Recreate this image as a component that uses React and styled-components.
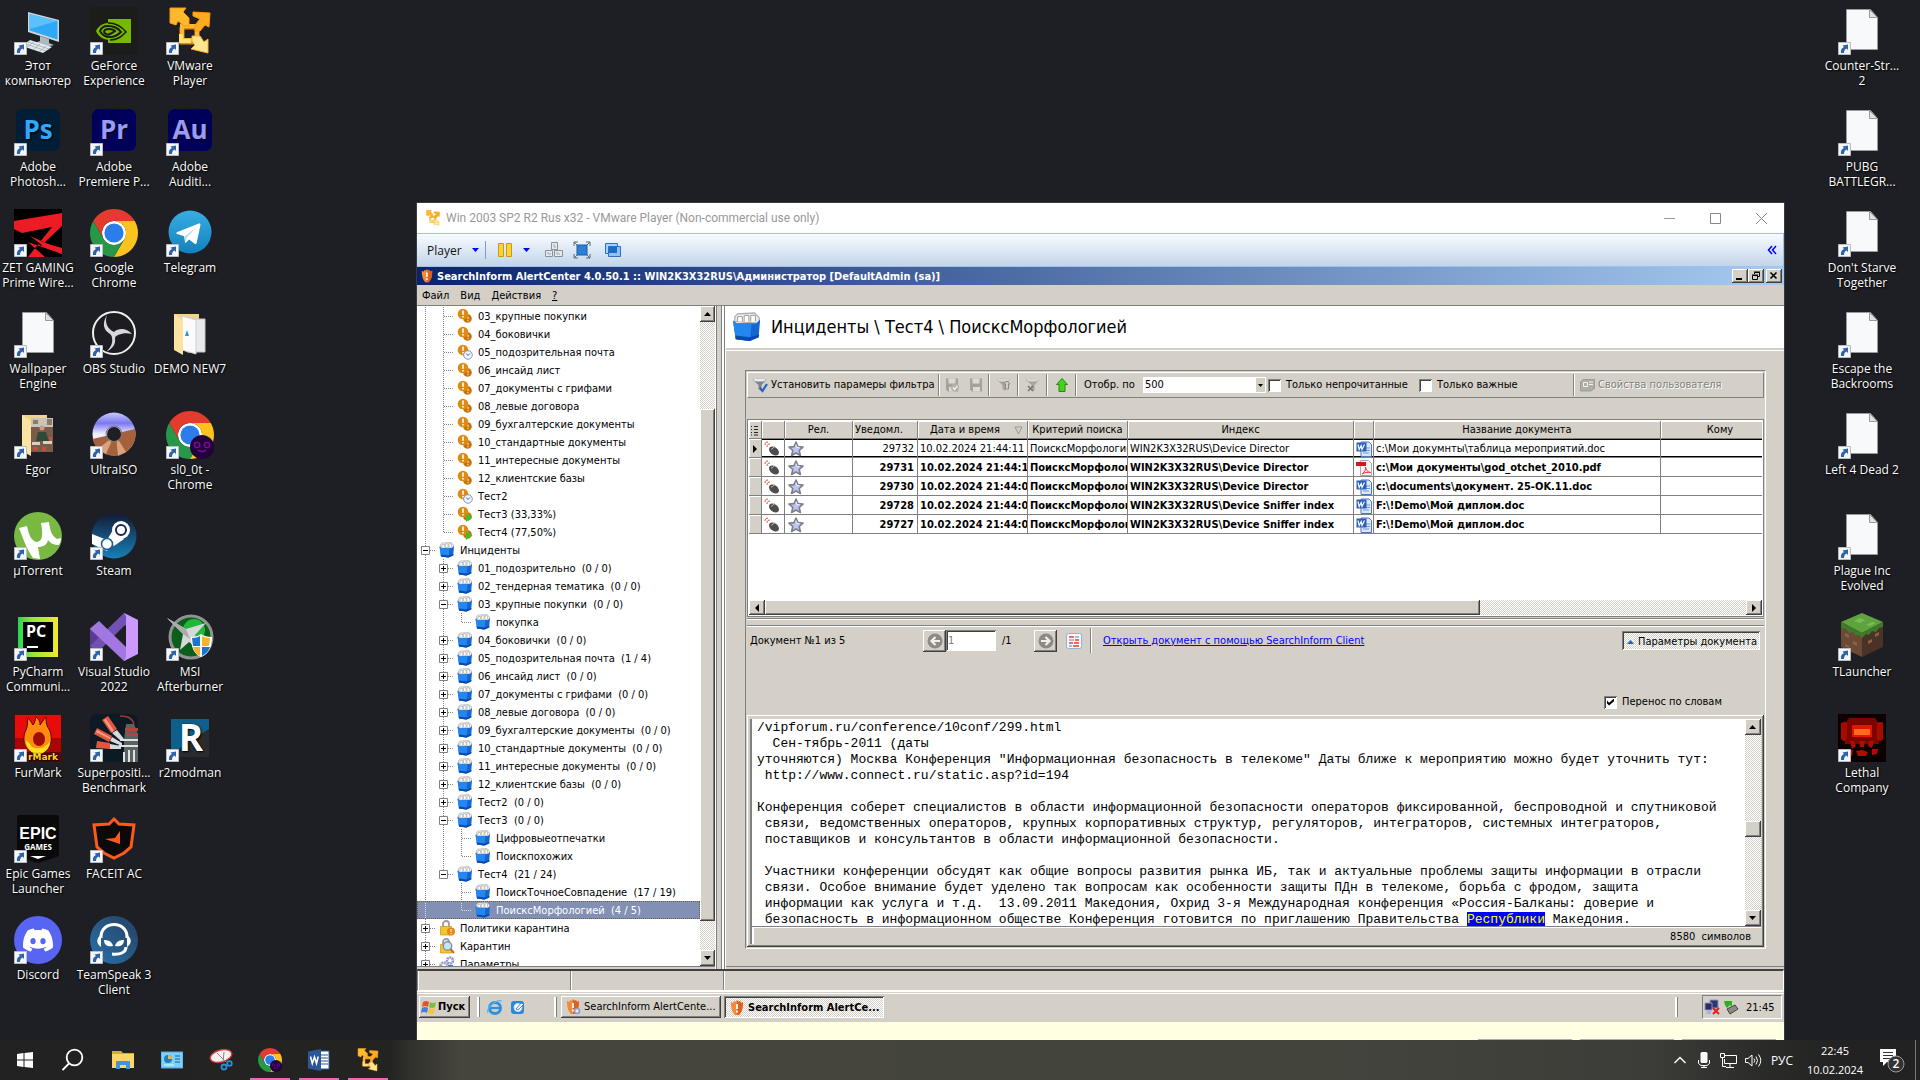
import React from 'react'
import styled, { createGlobalStyle, css } from 'styled-components'
import { SiDiscord } from 'react-icons/si'

const face = '#d4d0c8'
const ui = '"Open Sans", "Noto Sans", sans-serif'
const tahoma = '"DejaVu Sans Condensed", "DejaVu Sans", sans-serif'

const raised = css`
box-shadow: inset -1px -1px #404040, inset 1px 1px #fff, inset -2px -2px #808080;
`
const sunken = css`
box-shadow: inset 1px 1px #808080, inset -1px -1px #fff, inset 2px 2px #404040;
`
const checker = css`
background: repeating-conic-gradient(#fff 0 25%, ${face} 0 50%) 0 0 / 2px 2px;
`

const GlobalStyle = createGlobalStyle`
* { box-sizing: border-box; }
body { margin: 0; background: #1e1f24; overflow: hidden; }
button { border: none; padding: 0; margin: 0; background: transparent; font: inherit; color: inherit; }
svg { display: block; flex: none; }
`

/* ---------- desktop ---------- */

const Page = styled.div`
height: 100vh;
display: flex;
flex-direction: column;
font-family: ${ui};
`
const Desktop = styled.main`
flex: 1;
min-height: 0;
position: relative;
overflow: hidden;
display: flex;
justify-content: space-between;
padding-right: 20px;
`
const Columns = styled.div`
display: flex;
`
const IconColumn = styled.div`
width: 76px;
display: grid;
grid-auto-rows: 101px;
`
const Tile = styled.button`
display: flex;
flex-direction: column;
align-items: center;
padding-top: 7px;
gap: 3px;
font-size: 12px;
line-height: 15px;
color: #fff;
text-shadow: 1px 1px 2px #000, 0 0 1px #000;
white-space: pre;
`
const TileIcon = styled.span`
position: relative;
width: 48px;
height: 48px;
display: flex;
align-items: center;
justify-content: center;
`
const Shortcut = styled.svg`
position: absolute;
left: 0;
bottom: 0;
`

/* ---------- vmware window ---------- */

const Window = styled.section`
position: absolute;
left: 417px;
right: 136px;
top: 203px;
bottom: 0;
display: flex;
flex-direction: column;
background: ${face};
outline: 1px solid #3a3b40;
`
const TitleBar = styled.header`
height: 30px;
flex: none;
display: flex;
align-items: center;
background: #fff;
color: #999;
font-family: Roboto, ${ui};
font-size: 12px;
padding-left: 8px;
`
const WindowTitle = styled.span`
flex: 1;
padding-left: 5px;
`
const Grow = styled.div`
flex: 1;
`
const TitleButton = styled.button`
width: 46px;
height: 30px;
display: flex;
align-items: center;
justify-content: center;
`
const PlayerBar = styled.div`
height: 34px;
flex: none;
display: flex;
align-items: center;
padding: 0 6px 0 10px;
border: 1px solid #a3c0e5;
border-left: none;
background: linear-gradient(#f8fbff, #c2d5ea);
color: #111;
font-size: 12px;
`
const PlayerButton = styled.button`
display: flex;
align-items: center;
justify-content: ${p => p.$left ? 'flex-start' : 'center'};
gap: 10px;
width: ${p => p.$w}px;
height: 24px;
`
const BlueRule = styled.i`
width: 1px;
height: 18px;
background: #7aa0cc;
`

/* ---------- guest system ---------- */

const Guest = styled.div`
flex: 1;
min-height: 0;
display: flex;
flex-direction: column;
font-family: ${tahoma};
font-size: 11px;
line-height: 14px;
color: #000;
`
const Caption = styled.div`
height: 18px;
flex: none;
display: flex;
align-items: center;
gap: 3px;
padding: 0 2px 0 3px;
background: linear-gradient(90deg, #0a246a, #a6caf0);
color: #fff;
font-weight: bold;
white-space: nowrap;

span {
    flex: 1;
    padding-top: 2px;
}
`
const CaptionButton = styled.button`
width: 16px;
height: 14px;
margin-left: ${p => p.$gap ? 2 : 0}px;
background: ${face};
${raised}
display: flex;
align-items: center;
justify-content: center;
`
const CaptionButtons = styled.div`
display: flex;
`
const Menu = styled.nav`
height: 21px;
flex: none;
display: flex;
align-items: center;
gap: 11px;
padding: 2px 0 0 5px;
border-bottom: 1px solid #808080;
`
const Body = styled.div`
flex: 1;
min-height: 0;
display: flex;
`
const TreePane = styled.aside`
width: 298px;
flex: none;
display: flex;
background: #fff;
border-bottom: 1px solid #808080;
margin-bottom: 2px;
`
const Tree = styled.ul`
flex: 1;
min-width: 0;
margin: 0;
padding: 1px 0 0;
list-style: none;
overflow: hidden;
`
const TreeRow = styled.li`
height: 18px;
display: flex;
align-items: center;
padding-left: 4px;
white-space: pre;
background: ${p => p.$on ? '#8290b5' : 'none'};
color: ${p => p.$on ? '#fff' : '#000'};
outline: ${p => p.$on ? '1px dotted #6b6440' : 'none'};
outline-offset: -1px;

span {
    padding: 2px 0 0 5px;
}
`
const Splitter = styled.div`
width: 10px;
flex: none;
border-left: 1px solid #fff;
border-right: 1px solid #808080;
box-shadow: inset 1px 0 #808080, inset -2px 0 #fff, inset -3px 0 #808080;
`
const Main = styled.div`
flex: 1;
min-width: 0;
display: flex;
flex-direction: column;
border-left: 1px solid #fff;
`
const Heading = styled.header`
height: 42px;
flex: none;
display: flex;
align-items: center;
gap: 9px;
padding-left: 6px;
background: #fff;

h1 {
    margin: 0;
    font-size: 18px;
    line-height: 22px;
    font-weight: normal;
}
`
const Work = styled.div`
flex: 1;
min-height: 0;
margin-top: 2px;
border-top: 1px solid #fff;
padding: 19px 18px 17px 19px;
border-bottom: 1px solid #808080;
margin-bottom: 2px;
display: flex;
flex-direction: column;
`
const Frame = styled.div`
flex: 1;
min-height: 0;
display: flex;
flex-direction: column;
border: 1px solid #808080;
border-right-color: #fff;
border-bottom-color: #fff;
padding: 1px;
`
const Toolbar = styled.div`
height: 26px;
flex: none;
display: flex;
align-items: center;
border: 1px solid #fff;
border-right-color: #808080;
border-bottom-color: #808080;
white-space: nowrap;
`
const ToolButton = styled.button`
width: ${p => p.$w}px;
height: 24px;
display: flex;
align-items: center;
justify-content: ${p => p.$left ? 'flex-start' : 'center'};
gap: 3px;
padding-left: ${p => p.$left ? 4 : 0}px;

&:disabled {
    color: #808080;
    text-shadow: 1px 1px #fff;
}
`
const Rule = styled.i`
width: 2px;
height: ${p => p.$h || 22}px;
flex: none;
border-left: 1px solid #808080;
border-right: 1px solid #fff;
`
const CountLabel = styled.label`
width: 66px;
padding-left: 7px;
`
const Combo = styled.span`
position: relative;
width: 123px;
height: 16px;
background: #fff;
display: flex;

select {
    flex: 1;
    appearance: none;
    border: none;
    background: none;
    padding: 0 2px;
    font: inherit;
    color: #000;
}
svg {
    position: absolute;
    right: 1px;
    top: 1px;
    background: ${face};
    pointer-events: none;
}
`
const Check = styled.label`
display: flex;
align-items: center;
gap: 5px;
width: ${p => p.$w}px;
margin-left: ${p => p.$ml || 0}px;
white-space: nowrap;

input {
    appearance: none;
    position: relative;
    flex: none;
    width: 13px;
    height: 13px;
    margin: 0;
    background: #fff;
    ${sunken}
}
input:checked::after {
    content: '';
    position: absolute;
    left: 3px;
    top: 3px;
    width: 7px;
    height: 7px;
    background: #000;
    clip-path: polygon(0 30%, 30% 60%, 100% 0, 100% 40%, 30% 100%, 0 70%);
}
`
const GridFrame = styled.div`
height: 198px;
flex: none;
margin-top: 21px;
display: flex;
flex-direction: column;
background: #fff;
border: 1px solid #404040;
border-right-color: #fff;
border-bottom-color: #fff;
outline: 1px solid #808080;
outline-offset: -1px;
padding: 1px;
`
const GridScroll = styled.div`
flex: 1;
min-height: 0;
overflow: hidden;
`
const Grid = styled.table`
width: calc(100% + 17px);
table-layout: fixed;
border-spacing: 0;

th {
    height: 18px;
    padding: 1px 2px 0;
    background: ${face};
    border-right: 1px solid #808080;
    border-bottom: 1px solid #808080;
    box-shadow: inset 1px 1px #fff;
    font-weight: normal;
    overflow: hidden;
    white-space: nowrap;
}
th:nth-child(4) {
    text-align: left;
}
td {
    height: 19px;
    padding: 1px 0 0 2px;
    border-right: 1px solid #808080;
    border-bottom: 1px solid #808080;
    overflow: hidden;
    white-space: nowrap;
}
th:last-child, td:last-child {
    border-right: none;
}
`
const GridRow = styled.tr`
font-weight: ${p => p.$read ? 'normal' : 'bold'};

td {
    ${p => p.$read && 'box-shadow: inset 0 1px #000, inset 0 -1px #000;'}
}
td:first-child {
    background: ${face};
    box-shadow: inset 1px 1px #fff;
}
td:nth-child(3) {
    padding-left: 3px;
}
td:nth-child(4) {
    text-align: right;
    padding-right: 3px;
}
`
const SortHead = styled.div`
display: flex;
align-items: center;
justify-content: center;
gap: 14px;
padding-left: 8px;
`
const Bar = styled.div`
display: flex;
flex: none;
flex-direction: ${p => p.$v ? 'column' : 'row'};
width: ${p => p.$v ? `${p.$size}px` : 'auto'};
height: ${p => p.$v ? 'auto' : '15px'};
${checker}
`
const BarButton = styled.button`
flex: none;
width: 16px;
height: 16px;
max-width: 100%;
max-height: 100%;
background: ${face};
${raised}
display: flex;
align-items: center;
justify-content: center;
align-self: stretch;
`
const BarPart = styled.div`
flex: ${p => p.$grow} 1 0;
${p => p.$thumb && css`background: ${face}; ${raised}`}
`
const Divider = styled.div`
height: 9px;
flex: none;
margin-top: 1px;
border-top: 1px solid #808080;
border-bottom: 1px solid #fff;
box-shadow: inset 0 1px #fff, inset 0 -1px #808080;
`
const DocBar = styled.div`
height: 27px;
flex: none;
display: flex;
align-items: center;
padding: 0 4px 0 3px;
white-space: nowrap;

a {
    color: #00f;
    margin-left: 11px;
}
`
const DocTitle = styled.div`
width: 173px;
`
const PageButton = styled.button`
width: 23px;
height: 22px;
background: ${face};
${raised}
display: flex;
align-items: center;
justify-content: center;
`
const PageInput = styled.input`
width: 50px;
height: 21px;
border: none;
padding: 0 2px;
${sunken}
background: #fff;
font: inherit;
color: #808080;
`
const PageTotal = styled.span`
width: 38px;
padding-left: 6px;
`
const Pressed = styled.button`
${checker}
${sunken}
height: ${p => p.$h}px;
width: ${p => p.$w}px;
display: flex;
align-items: center;
gap: ${p => p.$gap}px;
padding: 2px 0 0 5px;
font-weight: ${p => p.$bold ? 'bold' : 'normal'};
`
const DocOptions = styled.div`
flex: none;
height: 61px;
display: flex;
justify-content: flex-end;
align-items: flex-end;
padding-bottom: 6px;
`
const DocFrame = styled.div`
flex: 1;
min-height: 0;
display: flex;
flex-direction: column;
${raised}
padding: 4px 3px 3px 3px;
`
const DocView = styled.div`
flex: 1;
min-height: 0;
display: flex;
background: #fff;
border-left: 2px solid #808080;
border-bottom: 1px solid #7f7c8c;
`
const DocText = styled.pre`
flex: 1;
min-width: 0;
margin: 0;
padding: 1px 0 0 5px;
overflow: hidden;
font-family: "Liberation Mono", monospace;
font-size: 13px;
line-height: 16px;

mark {
    background: #00f;
    color: #ff0;
}
`
const DocStatus = styled.div`
height: 17px;
flex: none;
border-left: 2px solid #808080;
box-shadow: inset 2px 1px #fff;
padding: 3px 10px 0 0;
text-align: right;
white-space: pre;
`
const StatusBar = styled.footer`
height: 22px;
flex: none;
display: flex;
border: 1px solid #fff;
border-top: 2px solid #404040;
border-left: 1px solid #808080;

div {
    width: 153px;
    border-right: 1px solid #808080;
    box-shadow: inset 1px 0 #fff;
}
div:last-child {
    flex: 1;
    border: none;
}
`
const GuestTaskbar = styled.footer`
height: 31px;
flex: none;
display: flex;
align-items: center;
padding: 0 2px;
border-top: 1px solid #fff;
box-shadow: inset 0 1px ${face}, inset 0 2px #fff;
white-space: nowrap;
`
const StartButton = styled.button`
width: 51px;
height: 22px;
background: ${face};
${raised}
display: flex;
align-items: center;
gap: 1px;
padding-left: 2px;
font-weight: bold;
`
const Grip = styled.i`
width: 3px;
height: 20px;
flex: none;
margin: 0 4px 0 7px;
border-left: 2px solid #fff;
border-right: 1px solid #808080;
`
const Quick = styled.div`
display: flex;
gap: 7px;
width: 63px;
padding-left: 3px;
`
const TaskButton = styled.button`
width: 160px;
height: 22px;
margin-right: 3px;
background: ${face};
${raised}
display: flex;
align-items: center;
gap: 3px;
padding-left: 4px;
`
const GuestTray = styled.div`
width: 80px;
height: 24px;
margin-left: 20px;
display: flex;
align-items: center;
gap: 3px;
padding-left: 1px;
border: 1px solid #808080;
border-right-color: #fff;
border-bottom-color: #fff;

time {
    padding: 2px 0 0 4px;
}
`
const Slab = styled.div`
height: 18px;
flex: none;
background: #ffffe1;
display: flex;
justify-content: flex-end;
align-items: flex-end;
gap: 8px;
padding-right: 8px;

i {
    width: 94px;
    height: 1px;
    background: #a9abb0;
}
`

/* ---------- host taskbar ---------- */

const Taskbar = styled.footer`
height: 40px;
flex: none;
display: flex;
background: linear-gradient(90deg, #222 0, #232322 390px, #33332e 415px, #45453c 460px, #43443c 70%, #3c3d38 86%, #2a2a29 92%, #222 96%);
color: #fff;
font-size: 12px;
line-height: 19px;
`
const TaskIcon = styled.button`
width: 49px;
height: 40px;
display: flex;
align-items: center;
justify-content: center;
background: ${p => p.$open ? 'linear-gradient(#e76ab8, #e76ab8) center bottom / 40px 2px no-repeat' : 'none'};
`
const Tray = styled.div`
display: flex;
align-items: center;
margin-left: auto;
`
const TrayButton = styled.button`
width: ${p => p.$w}px;
height: 40px;
display: flex;
align-items: center;
justify-content: center;
`
const Clock = styled.time`
width: 72px;
font-size: 11px;
text-align: center;
`
const ShowDesktop = styled.button`
width: 5px;
height: 40px;
border-left: 1px solid #777;
`

/* ---------- drawings ---------- */

const Svg = ({ s = 48, v = 48, children, ...rest }) => (
    <svg width={s} height={s} viewBox={`0 0 ${v} ${v}`} fill="none" {...rest}>{children}</svg>
)

const Computer = () => (
    <Svg>
        <path d="M14 5 45 13v22L14 25z" fill="#cfd6dc" />
        <path d="M15.500 7 43.500 14v18.500L15.500 23.500z" fill="#2fa8f5" />
        <path d="M15.500 7 43.500 14 15.500 22z" fill="#5cc0fb" />
        <path d="M26 29 35 32v4l5 2-7 2-12-4 5-2z" fill="#aeb8c0" />
        <path d="M16 33 38 40l-9 6L8 39z" fill="#e3e8ec" />
        <path d="M14 35 35 42M12 37l20 7M20 34.500 12 41M26 37l-7 6M32 39l-7 6" stroke="#9aa4ad" strokeWidth=".7" />
    </Svg>
)

const Nvidia = () => (
    <Svg>
        <path d="M0 0h48v48H0z" fill="#1c1d1b" />
        <path d="M18 12h23v24H18z" fill="#76b900" />
        <path d="M18 16c-6 0-10 4-12 8 2 5 7 9 14 9 8 0 12-4 16-8-4-5-10-9-18-9z" fill="#76b900" />
        <path d="M18 16c8 0 14 4 18 9-4 4-8 8-16 8" stroke="#1c1d1b" strokeWidth="1.600" />
        <path d="M18 19c-4 0-7 2-8 5 2 4 6 6 10 6 5 0 8-2 11-5-3-4-7-6-13-6z" fill="#76b900" stroke="#1c1d1b" strokeWidth="2" />
        <path d="M19 22c-3 0-5 1-5 3 1 2 4 3 6 2s4-2 5-3c-1-1-3-2-6-2z" fill="#76b900" stroke="#1c1d1b" strokeWidth="2" />
    </Svg>
)

const VMware = ({ s = 48 }) => (
    <Svg s={s}>
        <path d="M16 20v15h15V20H18" stroke="#e88a0e" strokeWidth="5" />
        <path d="M16 19h15v14H16z" stroke="#fdb62f" strokeWidth="4" />
        <path d="M4 1 20 1l-3 4 6 6v8h-5l-6-5-2 4-6-2z" fill="#fdb92e" stroke="#f79a12" />
        <path d="m27 5 17 1-1 14-4-2-5 6h-5v-6l5-6-7-3z" fill="#fdab20" stroke="#f79a12" />
        <path d="M42 46 25 42l4-4-3-4v-5h8l4 6 4-3z" fill="#ffe692" stroke="#f9ae2a" />
        <path d="M15 27v7h10" stroke="#ffe07c" strokeWidth="4" />
    </Svg>
)

const Adobe = ({ bg, fg, children }) => (
    <Svg>
        <rect x="2" y="1" width="44" height="42" rx="7" fill={bg} />
        <text x="24" y="31" textAnchor="middle" fontFamily="Open Sans" fontWeight="bold" fontSize="26" fill={fg}>{children}</text>
    </Svg>
)

const Zet = () => (
    <Svg>
        <path d="M0 0h48v48H0z" fill="#000" />
        <path d="M0 12 48 4v13L30 34l18 5v6L14 33l17 15H14L38 18 8 24 0 20z" fill="#ed1c24" />
        <path d="m16 27 14 6-3 4-6-4z" fill="#000" />
        <path d="m16 27 32 14v4L28 36z" fill="#ed1c24" />
    </Svg>
)

const Chrome = ({ s = 48, badge }) => (
    <Svg s={s}>
        <circle cx="24" cy="24" r="12" fill="#fff" />
        <path d="M24 12h20.780a24 24 0 0 0-41.560 0L13.610 30A12 12 0 0 1 24 12z" fill="#e33b2e" />
        <path d="M34.390 30 24 48a24 24 0 0 0 20.780-36H24a12 12 0 0 1 10.390 18z" fill="#fcc31e" />
        <path d="M13.610 30 3.220 12A24 24 0 0 0 24 48l10.390-18a12 12 0 0 1-20.780 0z" fill="#269847" />
        <circle cx="24" cy="24" r="9.600" fill="#2b7de9" />
        {badge && <>
            <circle cx="36" cy="36" r="12" fill="#24003d" />
            <circle cx="31" cy="34" r="2.600" stroke="#7a0b9c" strokeWidth="1.400" />
            <circle cx="41" cy="34" r="2.600" stroke="#7a0b9c" strokeWidth="1.400" />
            <path d="M32 39c2 2 6 2 8 0" stroke="#7a0b9c" strokeWidth="1.400" />
        </>}
    </Svg>
)

const Telegram = () => (
    <Svg>
        <defs><linearGradient id="tg" x2="0" y2="1"><stop stopColor="#37aee2" /><stop offset="1" stopColor="#1480bd" /></linearGradient></defs>
        <circle cx="24" cy="23" r="21.500" fill="url(#tg)" />
        <path d="m10.800 23.200 22-8.700c1-.4 1.900.2 1.600 1.700l-3.700 17.600c-.3 1.200-1 1.500-2 1l-5.600-4.200-2.800 2.700c-.3.300-.6.600-1.200.6l-.9-6.700-6.900-2.100c-1.200-.4-1.200-1.200-.5-1.900z" fill="#fff" />
        <path d="m18.500 27.500 12-9.500-9.500 10.500-1.500 5z" fill="#c5dcea" />
    </Svg>
)

const Paper = () => (
    <Svg>
        <path d="M8.500 2.500h24l7 8v32h-31z" fill="#f8f9fa" stroke="#9a9a9a" />
        <path d="M31.500 2.500v8h8z" fill="#dfe1e3" stroke="#9a9a9a" />
    </Svg>
)

const Obs = () => (
    <Svg>
        <circle cx="24" cy="23" r="21" fill="#1d1c20" stroke="#f0f0f0" strokeWidth="2" />
        <path d="M17 5c-3 8 1 14 7 17 6-5 13-3 18 2-5-1-9-1-14 1-2 1-3 2-3 3 1 7-3 11-9 14 5-5 7-9 6-14 0-2-1-3-2-4-7-4-8-11-3-19z" fill="#d9d7da" />
    </Svg>
)

const Folder = ({ photo }) => (
    <Svg>
        <path d="M8 4h25v36H8z" fill="#f1d48a" />
        {photo ? <>
            <path d="M17 7h22v34H17z" fill="#7a5a4a" />
            <path d="M17 7h22v9H17z" fill="#c9c3bd" />
            <path d="M19 9h5v4h-5zM33 8h5v6h-5z" fill="#8f7a68" />
            <circle cx="28" cy="17" r="2.500" fill="#d19a7c" />
            <path d="M24 21h8l3 9H22z" fill="#2f4a38" />
            <path d="M18 31h8v3h-8zM29 30h9v3h-9z" fill="#d8cfc5" />
            <path d="M19 36h5v3h-5zM28 36h4v4h-4zM35 26h3v4h-3z" fill="#c2503a" />
        </> : <>
            <path d="M17 9h22v33H21z" fill="#e9eaec" stroke="#c4c4c4" />
            <path d="m16 6 14 4v34L16 40z" fill="#fbfbfc" stroke="#cfcfcf" />
            <path d="m21 20 2 6h-4z" fill="#2d8fd6" />
        </>}
        <path d="m8 4 9 6v35l-9-5z" fill="#fbe3a3" />
    </Svg>
)

const Disc = () => (
    <Svg>
        <defs><linearGradient id="disc" x2="0" y2="1"><stop stopColor="#c9c8ff" /><stop offset=".25" stopColor="#7b78f0" /><stop offset=".5" stopColor="#eef" /></linearGradient></defs>
        <circle cx="24" cy="23" r="21.500" fill="url(#disc)" />
        <path d="M2.500 28 20 24l8-2 17-4A21.500 21.500 0 0 1 2.500 28z" fill="#a5603c" />
        <path d="m24 25-16 13 8 5zM26 25l2 20 8-4z" fill="#dba27f" />
        <circle cx="24" cy="23" r="7" fill="#1e1f24" />
        <circle cx="24" cy="23" r="8" stroke="#777" strokeWidth="1" />
    </Svg>
)

const Torrent = () => (
    <Svg>
        <circle cx="24" cy="24" r="24" fill="#78b843" />
        <path d="m5 16 8-2c2 9 4 15 10 16 6-1 6-8 4-19l8-1c1 9 3 14 8 17l4-1c0 3-1 5-2 7-5 0-9-2-11-5-1 5-5 7-10 7l2 12-7-1C12 36 9 26 5 16z" fill="#fff" />
    </Svg>
)

const Steam = () => (
    <Svg>
        <defs><linearGradient id="steam" x2="0" y2="1"><stop stopColor="#141b38" /><stop offset="1" stopColor="#1681b8" /></linearGradient></defs>
        <circle cx="24" cy="24" r="22.500" fill="url(#steam)" />
        <circle cx="31" cy="18" r="9" fill="#fff" />
        <path d="M23 18 17 28l7 6 10-7zM2 22l20 8-5 9L2 32z" fill="#fff" />
        <circle cx="31" cy="18" r="5" fill="#fff" stroke="#1c2650" strokeWidth="2" />
        <circle cx="17" cy="32" r="5.500" stroke="#1b5c93" strokeWidth="1.500" fill="#fff" />
    </Svg>
)

const PyCharm = () => (
    <Svg>
        <defs><linearGradient id="pc"><stop stopColor="#21d74a" /><stop offset=".35" stopColor="#8fe73a" /><stop offset="1" stopColor="#f4e928" /></linearGradient></defs>
        <path d="M4 4h40v40H4z" fill="url(#pc)" />
        <path d="M9 9h30v30H9z" fill="#000" />
        <path d="M13 33h11v2H13z" fill="#fff" />
        <text x="12" y="24" fontFamily="Open Sans" fontWeight="bold" fontSize="16" fill="#fff">PC</text>
    </Svg>
)

const VisualStudio = () => (
    <Svg>
        <path d="M0 15 9 8v30l-3 2-6-4z" fill="#5b3b92" />
        <path d="M34 0 48 7 34 13 8 39 0 33z" fill="#7350b3" />
        <path d="m9 8 27 26v13l-2 1L0 16z" fill="#a377e0" />
        <path d="M34 0 48 7v34l-14 7 2-4V3z" fill="#cb99ff" />
    </Svg>
)

const Msi = () => (
    <Svg>
        <circle cx="25" cy="24" r="21" fill="#0c5e1c" stroke="#8f9491" strokeWidth="3" />
        <circle cx="28" cy="17" r="11" fill="#1fb83a" />
        <path d="M1 5 20 16 40 10 29 22l6 16-12-9-9 8 3-16z" fill="#d7d9d8" />
        <path d="M1 5 20 16l4 10-7-5z" fill="#a9acab" />
        <path d="M25 24c5 0 7-1 10-3 3 2 6 3 11 3 0 10-3 17-11 20-7-3-10-10-10-20z" fill="#fff" />
        <path d="M26 25c4 0 6-1 8-2v10h-7zM36 34h8c-1 4-4 7-8 9z" fill="#1976d2" />
        <path d="M36 23c2 1 5 2 8 2l-1 8h-7zM27 34h7v9c-4-2-6-5-7-9z" fill="#f7b22c" />
    </Svg>
)

const FurMark = () => (
    <Svg>
        <path d="M0 0h48v48H0z" fill="#3b1512" />
        <path d="M1 1h46v36H1z" fill="#e80b0b" />
        <path d="M1 24h46v23H1z" fill="#a90606" />
        <path d="M1 38h46v9H1z" fill="#5f0403" />
        <path d="M12 16c2-4 1-8 2-12 3 3 4 6 5 7 2-2 2-5 3-8 4 3 4 6 4 8 2-2 3-5 6-8 0 4 0 8 3 12 5 10 2 24-11 25-13-1-17-14-12-24z" fill="#ff8a12" stroke="#5a0a00" />
        <path d="M12 26c0 8 5 14 13 14 7-1 11-7 11-13-2 3-3 4-4 4-2 4-14 5-16-1z" fill="#ffe21a" />
        <ellipse cx="25" cy="25" rx="6" ry="7" fill="#a00d05" />
        <text x="14" y="46" fontFamily="DejaVu Sans" fontWeight="bold" fontSize="9" fill="#ffd91a">rMark</text>
    </Svg>
)

const Superposition = () => (
    <Svg>
        <rect width="48" height="48" rx="7" fill="#0c1a25" />
        <path d="m12 6 6-4 9 13-6 4zM4 20l3-6 15 8-3 6zM6 34l1-7 13 2v6z" fill="#e4573f" />
        <path d="m14 6 2-1 8 12-2 1zM6 18l1-2 14 8-1 1z" fill="#f9a08c" />
        <path d="m22 19 5-3 7 9-3 2zM20 27l2-4 10 6v3zM20 30l11 2v3H20z" fill="#d7dadb" />
        <path d="M36 10h8l4 10v28H34V26z" fill="#5c6163" />
        <path d="M35 14h13v3H35zM36 20h12v2H36z" fill="#b34736" />
        <path d="M30 26h18M29 32h19M34 38v10M39 36v12M44 36v12" stroke="#dfe2e2" strokeWidth="2" />
        <path d="M30 2c8 0 12 2 14 8" stroke="#a2392c" strokeWidth="1.500" />
    </Svg>
)

const R2 = () => (
    <Svg>
        <path d="M5 5h38v38H5z" fill="#2a2b2d" />
        <path d="M5 5h38v10L5 40z" fill="#0e5f8c" />
        <text x="25" y="37" textAnchor="middle" fontFamily="Open Sans" fontWeight="bold" fontSize="37" fill="#fff">R</text>
    </Svg>
)

const Epic = () => (
    <Svg>
        <path d="M6 0h36q3 0 3 3v36q0 2-2 3L24 48 5 42q-2-1-2-3V3q0-3 3-3z" fill="#0a0a0a" />
        <text x="24" y="24" textAnchor="middle" fontFamily="Liberation Sans" fontWeight="bold" fontSize="16" fill="#fff">EPIC</text>
        <text x="24" y="35" textAnchor="middle" fontFamily="Open Sans" fontWeight="bold" fontSize="8" fill="#fff">GAMES</text>
        <path d="M16 41h16l-8 3z" fill="#fff" />
    </Svg>
)

const Faceit = () => (
    <Svg>
        <path d="M24 4 29 9l15 1-3 22-7 6-10 5-10-5-7-6L4 10l15-1z" fill="#0a0a0a" stroke="#ff5a1c" strokeWidth="3" />
        <path d="M30 16v13l-15-5 10-1z" fill="#ff5a1c" />
    </Svg>
)

const Round = styled.span`
width: 48px;
height: 48px;
border-radius: 50%;
background: ${p => p.$bg};
color: #fff;
display: flex;
align-items: center;
justify-content: center;
`

const TeamSpeak = () => (
    <Svg>
        <defs><linearGradient id="ts" x1="1" x2="0" y2="1"><stop stopColor="#26405f" /><stop offset="1" stopColor="#2872ae" /></linearGradient></defs>
        <circle cx="24" cy="24" r="24" fill="url(#ts)" />
        <path d="M11 22C10 4 38 4 37 22" stroke="#fff" strokeWidth="3" />
        <path d="M11 19c-5 3-5 9 0 12zM37 19c5 3 5 9 0 12z" fill="#fff" />
        <path d="M14 24c5 0 8 2 9 6-4 1-9 0-9-6zM34 24c-5 0-8 2-9 6 4 1 9 0 9-6z" fill="#fff" />
        <path d="M36 31c0 5-5 8-14 7" stroke="#fff" strokeWidth="3" />
    </Svg>
)

const Grass = () => (
    <Svg>
        <path d="M3 10 24 20v24L3 34z" fill="#6b4a35" />
        <path d="M45 10 24 20v24l21-10z" fill="#4a3326" />
        <path d="M24 0 45 9 24 20 3 9z" fill="#5fa33f" />
        <path d="M3 9l21 11v5l-3-3-3 1-3-4-4 1-3-4-5-1zM45 9 24 20v5l4-4 3 1 3-4 4 1 3-4 4-1z" fill="#3f7a2a" />
        <path d="m7 20 4 2v3l-4-2zm8 8 4 2v3l-4-2zm-8 3 4 2v2l-4-2zM30 28l4-2v3l-4 2zm7-7 4-2v3l-4 2z" fill="#8a6348" />
        <path d="m16 8 6-3 5 2-5 3zM28 12l6-3 4 1-6 3z" fill="#78bd55" />
    </Svg>
)

const Lethal = () => (
    <Svg>
        <path d="M0 0h48v48H0z" fill="#0d0000" />
        <path d="M11 4h26l4 6v20H7V10z" fill="#7c0500" />
        <path d="M14 11h20v12H14z" fill="#e31603" />
        <path d="M16 15h16v6H16z" fill="#ff6a1c" />
        <path d="M3 9q5-2 6 0v16q-3 4-6 0zM39 9q5-2 6 0v16q-3 4-6 0z" fill="#a80a00" />
        <path d="M12 27h4l2 5-4 3zM21 27h6l-1 6h-4zM31 27h5l-2 7-4-2zM8 35l7 1-1 6-5-2zM18 37l6-1 6 2-2 4h-8zM34 35h6l-1 5-5 1z" fill="#b00d00" />
    </Svg>
)

const Arrow = () => (
    <Shortcut width="13" height="13" viewBox="0 0 13 13">
        <path d="M.5.5h12v12H.5z" fill="#f4f6f9" stroke="#b9bcc2" />
        <path d="M3 11c-.5-3 .5-5 3-6L4.500 3.500 10 2.500V8L8.500 6.500C6.500 7.500 6 9 6 11z" fill="#2f62ad" />
    </Shortcut>
)

const Incident = ({ s = 16 }) => (
    <Svg s={s} v={16}>
        <path d="M1.500 5V2.500L3 1l9-.500L14.500 3v3z" fill="#ececec" stroke="#a9a9a9" strokeWidth=".6" />
        <path d="M3 5V2.500h2.500V5M6.500 5V1.800H9V5M10 5V1.800h2.500V5" stroke="#999" strokeWidth=".5" fill="#fff" />
        <path d="m.5 4.500 2 1.500h10.500l2-2-.8 9.500L9.500 15.500l-7.500-1z" fill="#1467d0" />
        <path d="m.5 4.500 2 1.500h8L9.500 15.500l-7.500-1z" fill="#2486ef" />
        <path d="m1.800 12.500 7.700 1 5-1.500-.3 1.500-4.700 2-7.500-1z" fill="#0a4aae" />
    </Svg>
)

const Alert = ({ mark }) => (
    <Svg s={16} v={16}>
        <circle cx="10.500" cy="10.500" r="4.300" fill="#c97208" />
        <path d="M11 8.500v2.700M11 12v1.200" stroke="#ffe9c4" />
        <circle cx="6" cy="6" r="5.300" fill="#e08a12" />
        <path d="M6 2.500v4.300M6 8v1.600" stroke="#fff" strokeWidth="1.700" />
        {mark === 'clock' && <>
            <circle cx="11" cy="11" r="4.300" fill="#eef3fc" stroke="#8a9cc4" />
            <path d="M9.500 9.500 11 11.500l2-2" stroke="#556" strokeWidth=".9" />
        </>}
        {mark === 'run' && <path d="m9 7 6.500 4.500L9 16z" fill="#3fc12f" />}
    </Svg>
)

const Lock = ({ find }) => (
    <Svg s={16} v={16}>
        <path d="M4 7V4a3 3 0 0 1 6 0v3" stroke="#9b9b9b" strokeWidth="1.800" />
        <path d="M1.500 6.500h11V15h-11z" fill="#f5c52c" stroke="#c79415" strokeWidth=".7" />
        {find ? <>
            <circle cx="8.500" cy="8" r="4.200" fill="#bfe6fb" stroke="#8a8f99" strokeWidth="1.400" />
            <path d="m11.500 11 3.500 4" stroke="#c2712a" strokeWidth="2" />
        </> : <>
            <circle cx="12" cy="11.500" r="4" fill="#e58a14" />
            <path d="M12 9v3M12 13v1" stroke="#fff" />
        </>}
    </Svg>
)

const Gears = () => (
    <Svg s={16} v={16}>
        <circle cx="11" cy="4.500" r="3" stroke="#8f95c4" strokeWidth="2.400" strokeDasharray="2 .6" />
        <circle cx="5" cy="10" r="3.400" stroke="#9ba0cf" strokeWidth="2.800" strokeDasharray="2 .6" />
        <path d="M9 9h5v6H9z" fill="#2d7bd4" />
    </Svg>
)

const Guide = ({ line, stub, box, light }) => (
    <Svg s={18} v={18}>
        {line && <path d={line === 'half' ? 'M4.500 0v9' : 'M4.500 0v18'} stroke={light ? '#ddd' : '#808080'} strokeDasharray="1 1" />}
        {stub && <path d="M5 9.500h9" stroke={light ? '#ddd' : '#808080'} strokeDasharray="1 1" />}
        {box && <>
            <path d="M.5 5.500h8v8h-8z" fill="#fff" stroke="#808080" />
            <path d={box === '+' ? 'M2 9.500h5M4.500 7v5' : 'M2 9.500h5'} stroke="#000" />
        </>}
    </Svg>
)

const Shield = ({ s = 16, gear }) => (
    <Svg s={s} v={16}>
        <path d="M8 0c1 2 2 2 3 1l1 2 2-1c0 6-1 10-4 13H6C3 12 2 8 2 2l2 1 1-2c1 1 2 1 3-1z" fill="#f28a3c" />
        <path d="M8 0c1 2 2 2 3 1l1 2 2-1c0 6-1 10-4 13H8z" fill="#dd611c" />
        <path d="M8 4v5M8 10.500v2" stroke="#fff" strokeWidth="1.800" />
        {gear && <circle cx="12" cy="12" r="2.500" fill="#e8ecf6" stroke="#8f9bc2" strokeWidth="1.600" />}
    </Svg>
)

const Funnel = ({ off, mark }) => (
    <Svg s={16} v={16}>
        <path d="M1 3c0-2 13-2 13 0L9.500 8v6l-3-2V8z" fill={off ? '#a8a49d' : '#7d838a'} />
        <ellipse cx="7.500" cy="3" rx="6" ry="1.600" fill={off ? '#d9d6d0' : '#e9ecef'} />
        {mark === 'check' && <path d="m8 11 2.500 3L15 7" stroke="#1e63c9" strokeWidth="2.200" />}
        {mark === 'cross' && <path d="m3 9 5 5M8 9l-5 5" stroke="#77746e" strokeWidth="1.600" />}
        {mark === 'up' && <path d="m11 4 3 3h-1.500v5h-3V7H8z" fill="#d4d0c8" stroke="#8c8982" />}
    </Svg>
)

const Disk = ({ check }) => (
    <Svg s={16} v={16}>
        <path d="M2 1.500h12v13H4l-2-2z" fill="#a5a29b" />
        <path d="M4.500 1.500h7v5h-7z" fill="#dedbd5" />
        <path d="M5 10h7v4.500H5z" fill="#dedbd5" />
        {check && <><circle cx="11" cy="10.500" r="4" fill="#b5b2ab" /><path d="m9 10.500 1.500 2 3-3.500" stroke="#f2f0ec" strokeWidth="1.400" /></>}
    </Svg>
)

const GreenUp = () => (
    <Svg s={16} v={16}><path d="m8 1.500 5.500 6H11v7H5v-7H2.500z" fill="#46d21c" stroke="#258a0a" /></Svg>
)

const Card = () => (
    <Svg s={16} v={16}>
        <path d="M4 2.500h11.500v9L12 14H1.500V5z" fill="#b0ada6" stroke="#8f8c86" strokeWidth=".7" />
        <path d="M4.500 5.500h4v4h-4zM10 5h4M10 7.500h4" stroke="#f4f2ee" />
    </Svg>
)

const Mouse = () => (
    <Svg s={16} v={16}>
        <path d="M1 4c0-2 1-3 3-3M3 6c0-2 1-3 3-3" stroke="#e0512f" />
        <ellipse cx="10" cy="10" rx="5.500" ry="3.800" transform="rotate(38 10 10)" fill="#4d4d4d" />
        <path d="m7 8.500 4-3" stroke="#b9b9b9" />
    </Svg>
)

const Star = () => (
    <Svg s={16} v={16}>
        <path d="m8 1 2 4.600 5 .5-3.800 3.400 1.200 5L8 12l-4.400 2.500 1.200-5L1 6.100l5-.5z" fill="#bfc4f0" stroke="#7d7f8c" strokeWidth="1.600" strokeLinejoin="round" />
        <path d="m8 3.500 1 3h2.500" stroke="#f0f1fd" />
    </Svg>
)

const Word = () => (
    <Svg s={16} v={16}>
        <path d="M5 1h8l2.500 2.500V15.500H5z" fill="#dce8fa" stroke="#4d79bb" />
        <path d="M7 12h6M9 9.500h5M9 7h5" stroke="#6f96d2" />
        <path d="M.5 1.500h10v9H.5z" fill="#2b5eb6" />
        <path d="m2 3.500 1.200 5 2-4 .8 4 2.500-5" stroke="#fff" strokeWidth="1.200" />
    </Svg>
)

const Pdf = () => (
    <Svg s={16} v={16}>
        <path d="M4.500.5h8l3 3v12h-11z" fill="#f4f4f4" stroke="#aaa" />
        <path d="M0 2h10v4H0z" fill="#d8141c" />
        <path d="M6 14c3-2 4-5 3.500-7 .5 3 2 5 5 5.500-3-.5-6 0-8.500 1.500z" stroke="#e0383e" />
    </Svg>
)

const Tri = ({ d, c = '#000' }) => (
    <svg width="8" height="8" viewBox="0 0 8 8">
        <path fill={c} d={{ up: 'M0 6h7L3.500 2z', down: 'M0 2h7L3.500 6z', left: 'M2 4l4-4v8z', right: 'M6 4 2 0v8z' }[d]} />
    </svg>
)

const RoundArrow = ({ back }) => (
    <Svg s={16} v={16}>
        <circle cx="8" cy="8" r="7.500" fill="#8d8a84" />
        <path d={back ? 'M13 8H5M8.500 4 4.500 8l4 4' : 'M3 8h8M7.500 4l4 4-4 4'} stroke="#f1efeb" strokeWidth="2.200" />
    </Svg>
)

/* ---------- data ---------- */

const paper = name => ({ name, icon: <Paper /> })

const left = [
    [
        { name: 'Этот\nкомпьютер', icon: <Computer /> },
        { name: 'Adobe\nPhotosh...', icon: <Adobe bg="#001e36" fg="#31a8ff">Ps</Adobe> },
        { name: 'ZET GAMING\nPrime Wire...', icon: <Zet /> },
        { name: 'Wallpaper\nEngine', icon: <Paper /> },
        { name: 'Egor', icon: <Folder photo /> },
        { name: 'µTorrent', icon: <Torrent /> },
        { name: 'PyCharm\nCommuni...', icon: <PyCharm /> },
        { name: 'FurMark', icon: <FurMark /> },
        { name: 'Epic Games\nLauncher', icon: <Epic /> },
        { name: 'Discord', icon: <Round $bg="#5865f2"><SiDiscord size={30} /></Round> },
    ],
    [
        { name: 'GeForce\nExperience', icon: <Nvidia /> },
        { name: 'Adobe\nPremiere P...', icon: <Adobe bg="#00005b" fg="#9999ff">Pr</Adobe> },
        { name: 'Google\nChrome', icon: <Chrome /> },
        { name: 'OBS Studio', icon: <Obs /> },
        { name: 'UltraISO', icon: <Disc /> },
        { name: 'Steam', icon: <Steam /> },
        { name: 'Visual Studio\n2022', icon: <VisualStudio /> },
        { name: 'Superpositi...\nBenchmark', icon: <Superposition /> },
        { name: 'FACEIT AC', icon: <Faceit /> },
        { name: 'TeamSpeak 3\nClient', icon: <TeamSpeak /> },
    ],
    [
        { name: 'VMware\nPlayer', icon: <VMware /> },
        { name: 'Adobe\nAuditi...', icon: <Adobe bg="#00005b" fg="#9999ff">Au</Adobe> },
        { name: 'Telegram', icon: <Telegram /> },
        { name: 'DEMO NEW7', icon: <Folder />, plain: true },
        { name: 'sl0_0t -\nChrome', icon: <Chrome badge /> },
        null,
        { name: 'MSI\nAfterburner', icon: <Msi /> },
        { name: 'r2modman', icon: <R2 /> },
    ],
]

const right = [
    paper('Counter-Str...\n2'),
    paper('PUBG\nBATTLEGR...'),
    paper("Don't Starve\nTogether"),
    paper('Escape the\nBackrooms'),
    paper('Left 4 Dead 2'),
    paper('Plague Inc\nEvolved'),
    { name: 'TLauncher', icon: <Grass /> },
    { name: 'Lethal\nCompany', icon: <Lethal /> },
]

const alert = (text, mark, last) => ({ level: 1, text, icon: <Alert mark={mark} />, last })
const item = (level, box, text, more) => ({ level, box, text, icon: <Incident />, ...more })

const tree = [
    alert('03_крупные покупки'),
    alert('04_боковички'),
    alert('05_подозрительная почта', 'clock'),
    alert('06_инсайд лист'),
    alert('07_документы с грифами'),
    alert('08_левые договора'),
    alert('09_бухгалтерские документы'),
    alert('10_стандартные документы'),
    alert('11_интересные документы'),
    alert('12_клиентские базы'),
    alert('Тест2', 'clock'),
    alert('Тест3 (33,33%)', 'run'),
    alert('Тест4 (77,50%)', 'run', true),
    item(0, '-', 'Инциденты'),
    item(1, '+', '01_подозрительно  (0 / 0)'),
    item(1, '+', '02_тендерная тематика  (0 / 0)'),
    item(1, '-', '03_крупные покупки  (0 / 0)'),
    item(2, null, 'покупка', { last: true }),
    item(1, '+', '04_боковички  (0 / 0)'),
    item(1, '+', '05_подозрительная почта  (1 / 4)'),
    item(1, '+', '06_инсайд лист  (0 / 0)'),
    item(1, '+', '07_документы с грифами  (0 / 0)'),
    item(1, '+', '08_левые договора  (0 / 0)'),
    item(1, '+', '09_бухгалтерские документы  (0 / 0)'),
    item(1, '+', '10_стандартные документы  (0 / 0)'),
    item(1, '+', '11_интересные документы  (0 / 0)'),
    item(1, '+', '12_клиентские базы  (0 / 0)'),
    item(1, '+', 'Тест2  (0 / 0)'),
    item(1, '-', 'Тест3  (0 / 0)'),
    item(2, null, 'Цифровыеотпечатки'),
    item(2, null, 'Поискпохожих', { last: true }),
    item(1, '-', 'Тест4  (21 / 24)', { last: true }),
    item(2, null, 'ПоискТочноеСовпадение  (17 / 19)', { orphan: true }),
    item(2, null, 'ПоисксМорфологией  (4 / 5)', { orphan: true, last: true, on: true }),
    { level: 0, box: '+', text: 'Политики карантина', icon: <Lock /> },
    { level: 0, box: '+', text: 'Карантин', icon: <Lock find /> },
    { level: 0, box: '+', text: 'Параметры', icon: <Gears /> },
]

const columns = [13, 23, 68, 65, 110, 100, 226, 20, 287, null]

const rows = [
    { id: 29732, date: '10.02.2024 21:44:11', index: 'WIN2K3X32RUS\\Device Director', doc: 'c:\\Мои докумнты\\таблица мероприятий.doc', read: true },
    { id: 29731, date: '10.02.2024 21:44:11', index: 'WIN2K3X32RUS\\Device Director', doc: 'c:\\Мои документы\\god_otchet_2010.pdf', pdf: true },
    { id: 29730, date: '10.02.2024 21:44:09', index: 'WIN2K3X32RUS\\Device Director', doc: 'c:\\documents\\документ. 25-OK.11.doc' },
    { id: 29728, date: '10.02.2024 21:44:08', index: 'WIN2K3X32RUS\\Device Sniffer index', doc: 'F:\\!Demo\\Мой диплом.doc' },
    { id: 29727, date: '10.02.2024 21:44:08', index: 'WIN2K3X32RUS\\Device Sniffer index', doc: 'F:\\!Demo\\Мой диплом.doc' },
]

const text = `/vipforum.ru/conference/10conf/299.html
  Сен-тябрь-2011 (даты
уточняются) Москва Конференция "Информационная безопасность в телекоме" Даты ближе к мероприятию можно будет уточнить тут:
 http://www.connect.ru/static.asp?id=194

Конференция соберет специалистов в области информационной безопасности операторов фиксированной, беспроводной и спутниковой
 связи, ведомственных операторов, крупных корпоративных структур, регуляторов, интеграторов, системных интеграторов,
 поставщиков и консультантов в области информационной безопасности.

 Участники конференции обсудят как общие вопросы развития рынка ИБ, так и актуальные проблемы защиты информации в отрасли
 связи. Особое внимание будет уделено так вопросам как особенности защиты ПДн в телекоме, борьба с фродом, защита
 информации как услуга и т.д.  13.09.2011 Македония, Охрид 3-я Международная конференция «Россия-Балканы: доверие и
 безопасность в информационном обществе Конференция готовится по приглашению Правительства `

/* ---------- parts ---------- */

const Shortcuts = ({ items }) => (
    <IconColumn>
        {items.map((it, i) => it ? (
            <Tile key={it.name}>
                <TileIcon>{it.icon}{!it.plain && <Arrow />}</TileIcon>
                {it.name}
            </Tile>
        ) : <span key={i} />)}
    </IconColumn>
)

const ScrollBar = ({ v, size = 16, parts }) => (
    <Bar $v={v} $size={size}>
        <BarButton aria-label="Назад"><Tri d={v ? 'up' : 'left'} /></BarButton>
        <BarPart $grow={parts[0]} />
        <BarPart $grow={parts[1]} $thumb />
        <BarPart $grow={parts[2]} />
        <BarButton aria-label="Вперёд"><Tri d={v ? 'down' : 'right'} /></BarButton>
    </Bar>
)

const TreeView = () => (
    <TreePane>
        <Tree>
            {tree.map((n, i) => (
                <TreeRow key={i} $on={n.on}>
                    {n.level > 0 && <Guide line="full" light={n.on} />}
                    {n.level > 1 && <Guide line={!n.orphan && 'full'} />}
                    <Guide line={n.last ? 'half' : 'full'} stub box={n.box} light={n.on} />
                    {n.icon}
                    <span>{n.text}</span>
                </TreeRow>
            ))}
        </Tree>
        <ScrollBar v size={15} parts={[87, 513, 29]} />
    </TreePane>
)

const FilterBar = () => (
    <Toolbar>
        <ToolButton $w={190} $left><Funnel mark="check" />Установить парамеры фильтра</ToolButton>
        <Rule />
        <ToolButton $w={24} aria-label="Сохранить"><Disk check /></ToolButton>
        <ToolButton $w={24} aria-label="Сохранить как"><Disk /></ToolButton>
        <Rule />
        <ToolButton $w={27} aria-label="Загрузить фильтр"><Funnel off mark="up" /></ToolButton>
        <Rule />
        <ToolButton $w={27} aria-label="Сбросить фильтр"><Funnel off mark="cross" /></ToolButton>
        <Rule />
        <ToolButton $w={27} aria-label="Вверх"><GreenUp /></ToolButton>
        <Rule />
        <CountLabel htmlFor="count">Отобр. по</CountLabel>
        <Combo>
            <select id="count" defaultValue="500"><option>500</option></select>
            <svg width="9" height="14" viewBox="0 0 9 14"><path d="M2 6h5L4.500 9z" fill="#000" /></svg>
        </Combo>
        <Check $w={151} $ml={2}><input type="checkbox" />Только непрочитанные</Check>
        <Check $w={110}><input type="checkbox" />Только важные</Check>
        <Grow />
        <Rule />
        <ToolButton $w={188} $left disabled><Card />Свойства пользователя</ToolButton>
    </Toolbar>
)

const Incidents = () => (
    <GridFrame>
        <GridScroll>
            <Grid>
                <colgroup>{columns.map((w, i) => <col key={i} width={w || undefined} />)}</colgroup>
                <thead>
                    <tr>
                        <th><svg width="8" height="11" viewBox="0 0 8 11"><path d="M0 1.500h1M3 1.500h4M0 4.500h1M3 4.500h4M0 7.500h1M3 7.500h4M0 10h1M3 10h4" stroke="#222" /></svg></th>
                        <th />
                        <th>Рел.</th>
                        <th>Уведомл.</th>
                        <th>
                            <SortHead>
                                Дата и время
                                <svg width="9" height="9" viewBox="0 0 9 9"><path d="M1 1h7L4.500 8z" fill="none" stroke="#999" /></svg>
                            </SortHead>
                        </th>
                        <th>Критерий поиска</th>
                        <th>Индекс</th>
                        <th />
                        <th>Название документа</th>
                        <th>Кому</th>
                    </tr>
                </thead>
                <tbody>
                    {rows.map(r => (
                        <GridRow key={r.id} $read={r.read}>
                            <td>{r.read && <Tri d="right" />}</td>
                            <td><Mouse /></td>
                            <td><Star /></td>
                            <td>{r.id}</td>
                            <td>{r.date}</td>
                            <td>ПоисксМорфологией</td>
                            <td>{r.index}</td>
                            <td>{r.pdf ? <Pdf /> : <Word />}</td>
                            <td>{r.doc}</td>
                            <td />
                        </GridRow>
                    ))}
                </tbody>
            </Grid>
        </GridScroll>
        <ScrollBar parts={[0, 715, 266]} />
    </GridFrame>
)

const DocPanel = () => (
    <>
        <DocBar>
            <DocTitle>Документ №1 из 5</DocTitle>
            <PageButton aria-label="Предыдущая"><RoundArrow back /></PageButton>
            <PageInput aria-label="Страница" defaultValue="1" />
            <PageTotal>/1</PageTotal>
            <PageButton aria-label="Следующая"><RoundArrow /></PageButton>
            <ToolButton $w={33} aria-label="Подсветка">
                <Svg s={16} v={16}>
                    <rect x=".5" y=".5" width="15" height="15" rx="2" fill="#f5f8fe" stroke="#8fb0e6" />
                    <path d="M3 4h5M9 7h4M3 10h4M8 10h5M7 13h6" stroke="#f0401c" strokeWidth="1.400" />
                    <path d="M9 4h4M3 7h5M3 13h3" stroke="#9aa4c0" strokeWidth="1.400" />
                </Svg>
            </ToolButton>
            <Rule $h={25} />
            <a href="#client">Открыть документ с помощью SearchInform Client</a>
            <Grow />
            <Pressed $w={138} $h={19} $gap={3}><Tri d="up" c="#1a66c8" />Параметры документа</Pressed>
        </DocBar>
        <DocOptions>
            <Check $w={160}><input type="checkbox" defaultChecked />Перенос по словам</Check>
        </DocOptions>
        <DocFrame>
            <DocView>
                <DocText>{text}<mark>Республики</mark> Македония.</DocText>
                <ScrollBar v parts={[86, 17, 73]} />
            </DocView>
            <DocStatus>8580  символов</DocStatus>
        </DocFrame>
    </>
)

const GuestDesktop = () => (
    <Guest>
        <Caption>
            <Shield s={14} />
            <span>SearchInform AlertCenter 4.0.50.1 :: WIN2K3X32RUS\Администратор [DefaultAdmin (sa)]</span>
            <CaptionButtons>
                <CaptionButton aria-label="Свернуть"><Svg s={10} v={10}><path d="M1 8h6" stroke="#000" strokeWidth="2" /></Svg></CaptionButton>
                <CaptionButton aria-label="Восстановить"><Svg s={10} v={10}><path d="M3.500 3V1.500h5v4H7M3 1h6M1.500 4.500h5v4h-5zM1 4h6" stroke="#000" /></Svg></CaptionButton>
                <CaptionButton $gap aria-label="Закрыть"><Svg s={10} v={10}><path d="m1.500 1.500 6 6m0-6-6 6" stroke="#000" strokeWidth="1.600" /></Svg></CaptionButton>
            </CaptionButtons>
        </Caption>
        <Menu>
            <button>Файл</button>
            <button>Вид</button>
            <button>Действия</button>
            <button><u>?</u></button>
        </Menu>
        <Body>
            <TreeView />
            <Splitter />
            <Main>
                <Heading>
                    <Incident s={30} />
                    <h1>Инциденты \ Тест4 \ ПоисксМорфологией</h1>
                </Heading>
                <Work>
                    <Frame>
                        <FilterBar />
                        <Incidents />
                        <Divider />
                        <DocPanel />
                    </Frame>
                </Work>
            </Main>
        </Body>
        <StatusBar><div /><div /><div /></StatusBar>
        <GuestTaskbar>
            <StartButton>
                <Svg s={16} v={16}>
                    <path d="M2 3q3-2 6 0L7 8Q4 6 1 8z" fill="#e8502a" />
                    <path d="M9 3q3 2 6 0l-1 5q-3 2-6 0z" fill="#7cbf3a" />
                    <path d="M1 9q3-2 6 0l-1 5q-3-2-6 0z" fill="#3f80e0" />
                    <path d="M8 9q3 2 6 0l-1 5q-3 2-6 0z" fill="#f6c62c" />
                </Svg>
                Пуск
            </StartButton>
            <Grip />
            <Quick>
                <Svg s={16} v={16}>
                    <circle cx="8" cy="9" r="5.500" stroke="#2d8fe0" strokeWidth="3" />
                    <path d="M4 9h9" stroke="#2d8fe0" strokeWidth="2.200" />
                    <path d="M1 14C-1 9 9 0 15 2" stroke="#5db4f0" strokeWidth="1.300" />
                </Svg>
                <Svg s={16} v={16}>
                    <rect x="1" y="2" width="13" height="13" rx="3" fill="#2c86dc" />
                    <circle cx="8" cy="8.500" r="4" fill="#fff" stroke="#bfe0fb" />
                    <path d="m6 10 5-6 3 1-6 6z" fill="#e6f3fd" stroke="#2c6cb8" strokeWidth=".8" />
                </Svg>
            </Quick>
            <Grip />
            <TaskButton><Shield gear />SearchInform AlertCente...</TaskButton>
            <Pressed $w={160} $h={22} $gap={3} $bold><Shield />SearchInform AlertCe...</Pressed>
            <Grow />
            <Grip />
            <GuestTray>
                <Svg s={16} v={16}>
                    <path d="M6 1h8v8H6z" fill="#34346c" stroke="#8c93cc" />
                    <path d="M1 4h7v7H1z" fill="#2b2b5c" stroke="#8c93cc" />
                    <path d="M3 12h4v3H2z" fill="#a9b2e6" />
                    <path d="m9 9 6 6m0-6-6 6" stroke="#e02020" strokeWidth="2" />
                </Svg>
                <Svg s={16} v={16}>
                    <path d="m4 10 8-4 3 4-8 5z" fill="#8a8a86" stroke="#44443f" />
                    <path d="M1 2h8v6L7 6 4 9 2 6z" fill="#2fb022" />
                </Svg>
                <time>21:45</time>
            </GuestTray>
        </GuestTaskbar>
        <Slab><i /><i /><i /></Slab>
    </Guest>
)

const PlayerWindow = () => (
    <Window>
        <TitleBar>
            <VMware s={16} />
            <WindowTitle>Win 2003 SP2 R2 Rus x32 - VMware Player (Non-commercial use only)</WindowTitle>
            <TitleButton aria-label="Свернуть"><Svg s={11} v={11}><path d="M0 5.500h11" stroke="#999" /></Svg></TitleButton>
            <TitleButton aria-label="Развернуть"><Svg s={11} v={11}><path d="M.5.5h10v10H.5z" stroke="#888" /></Svg></TitleButton>
            <TitleButton aria-label="Закрыть"><Svg s={11} v={11}><path d="m0 0 11 11M11 0 0 11" stroke="#888" /></Svg></TitleButton>
        </TitleBar>
        <PlayerBar>
            <PlayerButton $w={58} $left>Player<Tri d="down" c="#00f" /></PlayerButton>
            <BlueRule />
            <PlayerButton $w={56} aria-label="Приостановить">
                <Svg s={16} v={16}><path d="M1.500 1.500h5v13h-5zM9.500 1.500h5v13h-5z" fill="#fcd335" stroke="#c99a16" /></Svg>
                <Tri d="down" c="#00f" />
            </PlayerButton>
            <PlayerButton $w={24} aria-label="Ctrl+Alt+Del">
                <Svg s={18} v={18}><path d="M6.500 1.500h6v7h-6zM.5 9.500h7v6h-7zM9.500 9.500h8v6h-8z" fill="#e6e8ea" stroke="#8c9299" /><path d="M3 11v2h3M12 11v2h3M9 3v3h2" stroke="#a5abb2" /></Svg>
            </PlayerButton>
            <PlayerButton $w={32} aria-label="Во весь экран">
                <Svg s={18} v={18}>
                    <path d="M1 5V1h4M13 1h4v4M17 13v4h-4M5 17H1v-4M1 1l3 3M17 1l-3 3M17 17l-3-3M1 17l3-3" stroke="#5b6776" />
                    <path d="M4 4h10v10H4z" fill="#2e7fd6" stroke="#1b5ca8" />
                </Svg>
            </PlayerButton>
            <PlayerButton $w={30} aria-label="Unity">
                <Svg s={18} v={18}>
                    <path d="M1.500 2.500h12v10h-12z" fill="#a9d3f5" stroke="#2a72bd" />
                    <path d="M4.500 5.500h12v10h-12z" fill="#8fc4f2" stroke="#2a72bd" />
                    <path d="M5 6h8v6H5z" fill="#1f6ac4" />
                </Svg>
            </PlayerButton>
            <Grow />
            <button aria-label="Свернуть панель"><Svg s={10} v={10}><path d="M5 1 1.500 5 5 9M9 1 5.500 5 9 9" stroke="#00f" strokeWidth="1.500" /></Svg></button>
        </PlayerBar>
        <GuestDesktop />
    </Window>
)

const HostTaskbar = () => (
    <Taskbar>
        <TaskIcon aria-label="Пуск"><Svg s={16} v={16}><path d="m0 2 6.500-1v6.500H0zM7.500 1 16 0v7.500H7.500zM0 8.500h6.500V15L0 14zM7.500 8.500H16V16l-8.500-1z" fill="#fff" /></Svg></TaskIcon>
        <TaskIcon aria-label="Поиск"><Svg s={24} v={24}><circle cx="12.500" cy="9.500" r="7.800" stroke="#fff" strokeWidth="1.800" /><path d="M7 15.500.5 22" stroke="#fff" strokeWidth="1.800" /></Svg></TaskIcon>
        <TaskIcon aria-label="Проводник">
            <Svg s={24} v={24}>
                <path d="M1 3h9l2 2h11v15H1z" fill="#e0a52a" /><path d="M1 6h22v14H1z" fill="#fdd568" />
                <path d="M5 20v-6q0-1 1-1h12q1 0 1 1v7h-4v-4H9v4H5z" fill="#3c96dc" />
            </Svg>
        </TaskIcon>
        <TaskIcon aria-label="Панель управления">
            <Svg s={22} v={22}>
                <path d="M0 3h22v16H0z" fill="#7fd0f7" stroke="#4ba9dd" /><circle cx="7" cy="10" r="4" fill="#1f7fc4" />
                <path d="M7 6v4h4a4 4 0 0 0-4-4z" fill="#f7b32c" /><path d="M14 7h5M14 10h5M14 13h5" stroke="#155f9c" /><path d="M3 16h10" stroke="#e4f6ff" />
            </Svg>
        </TaskIcon>
        <TaskIcon aria-label="Ножницы">
            <Svg s={24} v={24}>
                <ellipse cx="12" cy="8" rx="11" ry="6" transform="rotate(-15 12 8)" fill="#f2f2f2" stroke="#d43c3c" strokeWidth="1.400" />
                <path d="M8 5 17 14M15 4l-1 10" stroke="#888" /><circle cx="15" cy="19" r="2.500" stroke="#2a8fd0" strokeWidth="1.800" /><circle cx="20.500" cy="15.500" r="2.300" stroke="#2a8fd0" strokeWidth="1.800" />
            </Svg>
        </TaskIcon>
        <TaskIcon $open aria-label="Chrome"><Chrome s={24} badge /></TaskIcon>
        <TaskIcon $open aria-label="Word">
            <Svg s={24} v={24}>
                <path d="M12 3h10v18H12z" fill="#fff" stroke="#2b579a" /><path d="M14 7h7M14 10h7M14 13h7M14 16h7" stroke="#2b579a" />
                <path d="M1 3.500 14 1v22L1 20.500z" fill="#2b5797" /><path d="m3.500 8.500 1.800 7L7.500 9l2 6.500 1.700-7" stroke="#fff" strokeWidth="1.500" />
            </Svg>
        </TaskIcon>
        <TaskIcon $open aria-label="VMware Player"><VMware s={24} /></TaskIcon>
        <Tray>
            <TrayButton $w={24} aria-label="Скрытые значки"><Svg s={14} v={14}><path d="m1.500 10 5.500-5.500L12.500 10" stroke="#fff" strokeWidth="1.400" /></Svg></TrayButton>
            <TrayButton $w={24} aria-label="Микрофон"><Svg s={16} v={16}><rect x="4.500" width="7" height="11" rx="1.500" fill="#fff" /><path d="M2.500 8v3.500L5 13.500h6l2.500-2V8M8 13v3M5 15.500h6" stroke="#fff" /></Svg></TrayButton>
            <TrayButton $w={25} aria-label="Сеть"><Svg s={17} v={17}><path d="M5 3.500h11.500v8H4.500V7M10 12v3M6 15.500h8M.5 1.500h4v4h-4zM2.500 6v8.500H6" stroke="#fff" /></Svg></TrayButton>
            <TrayButton $w={24} aria-label="Громкость"><Svg s={17} v={17}><path d="M.5 6.500H3l4-3.500v11L3 10.500H.5zM9 6.500q1.500 2 0 4M11 4.500q3 4 0 8M13.500 2.500q4.500 6 0 12" stroke="#fff" /></Svg></TrayButton>
            <TrayButton $w={34}>РУС</TrayButton>
            <Clock>22:45<br />10.02.2024</Clock>
            <TrayButton $w={44} aria-label="Уведомления">
                <svg width="26" height="26" viewBox="2 0 26 26">
                    <path d="M2 2h16v13H9l-4 4v-4H2z" fill="#fff" />
                    <path d="M5 5.500h10M5 8.500h10M5 11.500h10" stroke="#333" />
                    <circle cx="18" cy="17" r="8" fill="#333" stroke="#999" />
                    <text x="18" y="21" textAnchor="middle" fontFamily="Open Sans" fontWeight="600" fontSize="12" fill="#fff">2</text>
                </svg>
            </TrayButton>
            <ShowDesktop aria-label="Свернуть все окна" />
        </Tray>
    </Taskbar>
)

const App = () => (
    <Page>
        <GlobalStyle />
        <Desktop>
            <Columns>
                {left.map((items, i) => <Shortcuts key={i} items={items} />)}
            </Columns>
            <Shortcuts items={right} />
            <PlayerWindow />
        </Desktop>
        <HostTaskbar />
    </Page>
)

export default App
